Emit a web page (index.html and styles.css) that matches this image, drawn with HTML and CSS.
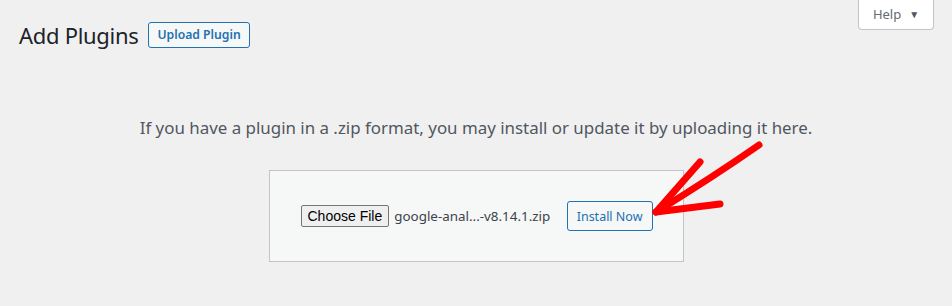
FILE: index.html
```html
<!DOCTYPE html>
<html lang="en">
<head>
    <meta charset="UTF-8">
    <title>Add Plugins</title>
    <link rel="stylesheet" href="styles.css">
</head>
<body>
    <div class="wrap">
        <div class="help-bar">
            <button class="help-tab" type="button">Help <span class="caret">&#9660;</span></button>
        </div>

        <div class="page-head">
            <h1>Add Plugins</h1>
            <a class="page-title-action" href="#">Upload Plugin</a>
        </div>

        <!-- Upload form -->
        <div class="upload-plugin">
            <p class="install-help">If you have a plugin in a .zip format, you may install or update it by uploading it here.</p>
            <form class="upload-form" action="#" method="POST">
                <div class="file-pick">
                    <span class="choose-btn">Choose File</span>
                    <span class="file-name">google-anal...-v8.14.1.zip</span>
                </div>
                <button class="install-btn" type="submit">Install Now</button>
                <svg class="arrow" width="130" height="100" viewBox="0 0 130 100">
                    <path d="M114 20 Q 68 52 11 87" />
                    <path d="M55 37 L 11 87 L 75 79" />
                </svg>
            </form>
        </div>
    </div>
</body>
</html>
```

FILE: styles.css
```css
* {
    box-sizing: border-box;
    margin: 0;
    padding: 0;
}

body {
    background: #f0f0f1;
    color: #3c434a;
    font-family: 'Noto Sans', sans-serif;
    font-size: 13px;
}

.wrap {
    position: relative;
    height: 306px;
    padding: 0 19px;
}

.help-tab {
    position: absolute;
    top: -1px;
    right: 18px;
    width: 76px;
    height: 31px;
    background: #fff;
    border: 1px solid #c3c4c7;
    border-top: none;
    border-radius: 0 0 4px 4px;
    color: #646970;
    font-family: inherit;
    font-size: 13px;
    display: flex;
    align-items: center;
    justify-content: center;
    gap: 8px;
}

.caret {
    font-size: 10px;
    color: #50575e;
}

.page-head {
    display: flex;
    align-items: center;
    gap: 10px;
    padding-top: 21px;
}

h1 {
    font-size: 22px;
    font-weight: 400;
    color: #1d2327;
    line-height: 28px;
    letter-spacing: -0.3px;
}

.page-title-action {
    display: inline-block;
    border: 1px solid #2271b1;
    border-radius: 3px;
    background: #f6f7f7;
    color: #2271b1;
    font-size: 12.2px;
    font-weight: 600;
    text-decoration: none;
    padding: 0 8px;
    height: 26px;
    line-height: 24px;
}

.upload-plugin {
    display: flex;
    flex-direction: column;
    align-items: center;
    padding-top: 66px;
}

.install-help {
    font-size: 16.9px;
    color: #50575e;
    line-height: 26px;
}

.upload-form {
    position: relative;
    margin-top: 29px;
    width: 415px;
    height: 92px;
    border: 1px solid #c3c4c7;
    background: #f6f7f7;
    display: flex;
    align-items: center;
    padding: 0 30px 0 31px;
    justify-content: space-between;
}

.file-pick {
    display: flex;
    align-items: center;
    gap: 5px;
}

.choose-btn {
    display: inline-block;
    font-family: 'Liberation Sans', Arial, sans-serif;
    font-size: 14px;
    color: #000;
    background: #efefef;
    border: 1px solid #767676;
    border-radius: 2px;
    height: 22px;
    line-height: 20px;
    padding: 0 6px;
}

.file-name {
    font-size: 13.4px;
    color: #3c434a;
}

.install-btn {
    border: 1px solid #2271b1;
    border-radius: 3px;
    background: #f6f7f7;
    color: #2271b1;
    font-family: inherit;
    font-size: 12.5px;
    height: 30px;
    padding: 0 9px;
}

.arrow {
    position: absolute;
    left: 375px;
    top: -46px;
    overflow: visible;
}

.arrow path {
    fill: none;
    stroke: #ff0000;
    stroke-width: 7;
    stroke-linecap: round;
    stroke-linejoin: round;
}
```
